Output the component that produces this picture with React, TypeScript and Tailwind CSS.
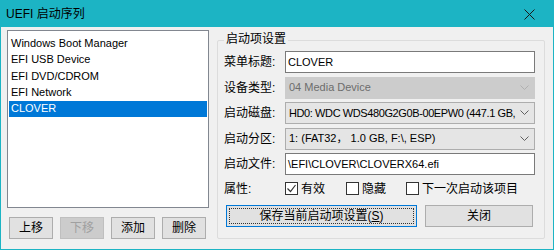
const font = { fontFamily: '"Liberation Sans", "Noto Sans CJK SC", sans-serif' };

function Chevron({ color = '#606060' }: { color?: string }) {
  return (
    <svg width="9" height="6" viewBox="0 0 9 6" className="shrink-0">
      <path d="M0.5 0.5 L4.5 4.5 L8.5 0.5" fill="none" stroke={color} strokeWidth="1" />
    </svg>
  );
}

function Check({ checked }: { checked?: boolean }) {
  return (
    <span className="w-[13px] h-[13px] border border-[#333] bg-white flex items-center justify-center shrink-0">
      {checked && (
        <svg width="11" height="11" viewBox="0 0 11 11">
          <path d="M1.5 5.5 L4.5 8.5 L9.5 2" fill="none" stroke="#333" strokeWidth="1.2" />
        </svg>
      )}
    </span>
  );
}

export default function App() {
  const items = ['Windows Boot Manager', 'EFI USB Device', 'EFI DVD/CDROM', 'EFI Network', 'CLOVER'];
  const labels = ['菜单标题:', '设备类型:', '启动磁盘:', '启动分区:', '启动文件:'];

  return (
    <div style={font} className="w-[554px] h-[250px] border border-[#1cb4c4] bg-[#f0f0f0] flex flex-col text-[12px] text-black leading-none overflow-hidden">
      <div className="h-[26px] bg-[#1cb4c4] flex items-center justify-between pl-[5px] pr-[18px] shrink-0">
        <span className="text-[12px]">UEFI 启动序列</span>
        <svg width="11" height="11" viewBox="0 0 11 11">
          <path d="M0.5 0.5 L10.5 10.5 M10.5 0.5 L0.5 10.5" stroke="#1a1a1a" strokeWidth="1" />
        </svg>
      </div>

      <div className="flex flex-1 pl-[6px] pt-[3px]">
        <div className="w-[202px] flex flex-col">
          <div className="h-[178px] border border-[#828790] bg-white pt-[4.5px] px-[1px] text-[11px]">
            {items.map((it, i) => (
              <div
                key={it}
                className={`h-[16.25px] flex items-center pl-[2px] ${i === 4 ? 'bg-[#0078d7] text-white' : 'text-black'}`}
              >
                {it}
              </div>
            ))}
          </div>
          <div className="flex gap-[7px] mt-[9px] pl-[2px]">
            {['上移', '下移', '添加', '删除'].map((b, i) => (
              <div
                key={b}
                className={`w-[44px] h-[22px] flex items-center justify-center border ${
                  i === 1 ? 'bg-[#cccccc] border-[#bfbfbf] text-[#a0a0a0]' : 'bg-[#e1e1e1] border-[#adadad]'
                }`}
              >
                {b}
              </div>
            ))}
          </div>
        </div>

        <div className="relative ml-[8px] mt-[10px] w-[328px] h-[199px] border border-[#dcdcdc] rounded-[2px] pl-[6px] pt-[10px]">
          <span className="absolute left-[6px] -top-[8px] bg-[#f0f0f0] px-[2px]">启动项设置</span>
          <div className="flex">
            <div className="w-[61px] flex flex-col gap-[3.5px]">
              {labels.map((l) => (
                <div key={l} className="h-[22px] flex items-center">{l}</div>
              ))}
            </div>
            <div className="w-[250px] flex flex-col gap-[3.5px] text-[11px]">
              <div className="h-[22px] border border-[#7a7a7a] bg-white flex items-center pl-[2px]">CLOVER</div>
              <div className="h-[22px] border border-[#cccccc] bg-[#cccccc] text-[#6d6d6d] flex items-center justify-between pl-[3px] pr-[5px]">
                <span>04 Media Device</span>
                <Chevron color="#b0b0b0" />
              </div>
              <div className="h-[22px] border border-[#adadad] bg-[#e5e5e5] flex items-center justify-between pl-[3px] pr-[5px]">
                <span className="whitespace-nowrap tracking-[-0.4px]">HD0: WDC WDS480G2G0B-00EPW0 (447.1 GB,</span>
                <Chevron />
              </div>
              <div className="h-[22px] border border-[#adadad] bg-[#e5e5e5] flex items-center justify-between pl-[3px] pr-[5px]">
                <span>1: (FAT32， 1.0 GB, F:\, ESP)</span>
                <Chevron />
              </div>
              <div className="h-[22px] border border-[#7a7a7a] bg-white flex items-center pl-[2px]">\EFI\CLOVER\CLOVERX64.efi</div>
            </div>
          </div>
          <div className="flex items-center h-[15px] mt-[6px]">
            <span className="w-[61px]">属性:</span>
            <div className="flex items-center gap-[3px]"><Check checked /><span>有效</span></div>
            <div className="flex items-center gap-[3px] ml-[21px]"><Check /><span>隐藏</span></div>
            <div className="flex items-center gap-[3px] ml-[20px]"><Check /><span>下一次启动该项目</span></div>
          </div>
          <div className="flex gap-[8px] mt-[9px] pl-[2px]">
            <div className="w-[191px] h-[22px] border border-[#0078d7] bg-[#e1e1e1] p-[2px]">
              <div className="w-full h-full border border-dotted border-[#333] flex items-center justify-center">保存当前启动项设置(<span className="underline">S</span>)</div>
            </div>
            <div className="w-[108px] h-[22px] border border-[#adadad] bg-[#e1e1e1] flex items-center justify-center">关闭</div>
          </div>
        </div>
      </div>
    </div>
  );
}
